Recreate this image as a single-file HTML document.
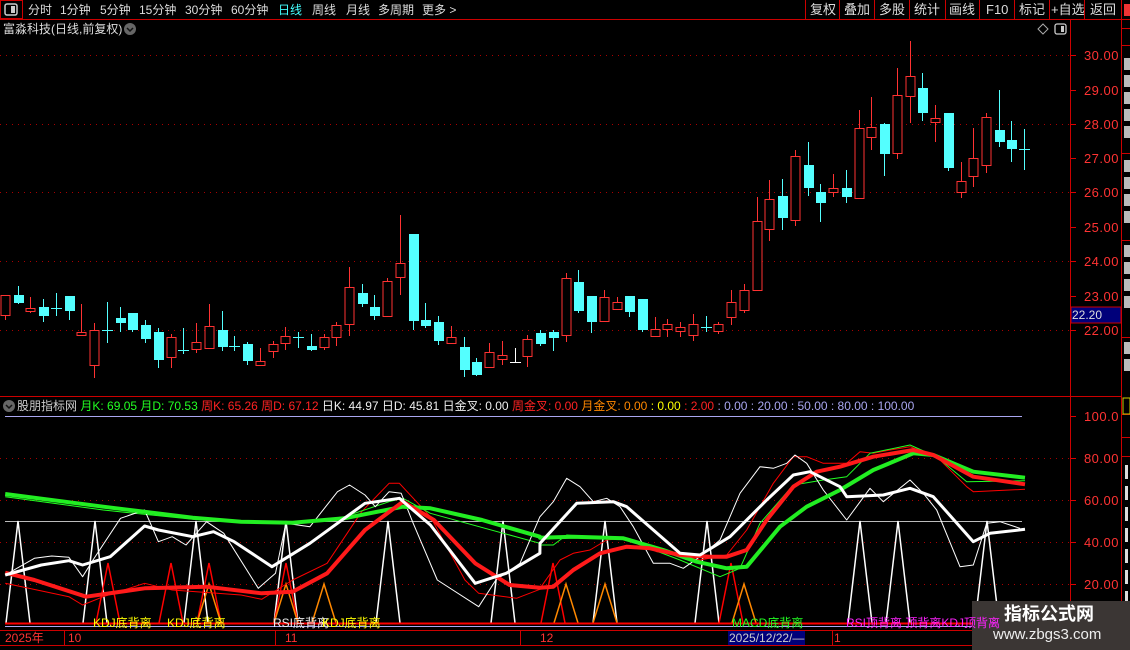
<!DOCTYPE html>
<html><head><meta charset="utf-8">
<style>
*{margin:0;padding:0;box-sizing:border-box}
body{width:1130px;height:650px;background:#000;overflow:hidden;position:relative;font-family:"Liberation Sans","Noto Sans CJK SC",sans-serif;color:#ddd}
.t{position:absolute;white-space:nowrap;font-size:13px;line-height:16px}
.m{position:absolute;white-space:nowrap;font-size:12px;line-height:16px;top:2px;color:#ddd}
.ax{position:absolute;left:1083px;width:36px;text-align:right;color:#ff3333;font-size:13px;line-height:14px;letter-spacing:0.5px}
</style></head><body>
<svg id="s" width="1130" height="650" style="position:absolute;left:0;top:0">
<rect x="0.5" y="0.5" width="22" height="18" fill="none" stroke="#c00" stroke-width="1"/>
<rect x="5" y="4" width="12" height="11" rx="2" fill="none" stroke="#ccc" stroke-width="1.5"/>
<rect x="11" y="6" width="4" height="7" fill="#ccc"/>
<line x1="0" y1="19.5" x2="1130" y2="19.5" stroke="#c00"/>
<g stroke="#c00">
<line x1="805.5" y1="0" x2="805.5" y2="19"/><line x1="839.5" y1="0" x2="839.5" y2="19"/><line x1="874.5" y1="0" x2="874.5" y2="19"/><line x1="909.5" y1="0" x2="909.5" y2="19"/><line x1="945.5" y1="0" x2="945.5" y2="19"/><line x1="979.5" y1="0" x2="979.5" y2="19"/><line x1="1014.5" y1="0" x2="1014.5" y2="19"/><line x1="1049.5" y1="0" x2="1049.5" y2="19"/><line x1="1084.5" y1="0" x2="1084.5" y2="19"/><line x1="1121.5" y1="0" x2="1121.5" y2="19"/>
<line x1="1070.5" y1="20" x2="1070.5" y2="630"/>
<line x1="1121.5" y1="20" x2="1121.5" y2="650"/>
<line x1="0" y1="396.5" x2="1121" y2="396.5"/>
</g>
<rect x="1124" y="4" width="6" height="12" fill="#e33"/>
<circle cx="130" cy="29" r="6" fill="#666"/><path d="M127 28l3 3 3-3" stroke="#111" stroke-width="1.5" fill="none"/>
<path d="M1043 24l5 5-5 5-5-5z" fill="none" stroke="#aaa"/>
<rect x="1055" y="24" width="11" height="10" rx="2" fill="none" stroke="#ccc" stroke-width="1.3"/><rect x="1061" y="26" width="3" height="6" fill="#ccc"/>
<g stroke="#a00" stroke-dasharray="1 5">
<line x1="0" y1="55.5" x2="1070" y2="55.5"/><line x1="0" y1="124.5" x2="1070" y2="124.5"/><line x1="0" y1="192.5" x2="1070" y2="192.5"/><line x1="0" y1="261.5" x2="1070" y2="261.5"/><line x1="0" y1="330.5" x2="1070" y2="330.5"/>
<line x1="0" y1="458.5" x2="1070" y2="458.5"/><line x1="0" y1="500.5" x2="1070" y2="500.5"/><line x1="0" y1="542.5" x2="1070" y2="542.5"/><line x1="0" y1="584.5" x2="1070" y2="584.5"/>
</g>
<g stroke="#d00">
<line x1="1071" y1="55.5" x2="1076" y2="55.5"/><line x1="1071" y1="90.5" x2="1076" y2="90.5"/><line x1="1071" y1="124.5" x2="1076" y2="124.5"/><line x1="1071" y1="158.5" x2="1076" y2="158.5"/><line x1="1071" y1="192.5" x2="1076" y2="192.5"/><line x1="1071" y1="227.5" x2="1076" y2="227.5"/><line x1="1071" y1="261.5" x2="1076" y2="261.5"/><line x1="1071" y1="296.5" x2="1076" y2="296.5"/><line x1="1071" y1="330.5" x2="1076" y2="330.5"/>
<line x1="1071" y1="416.5" x2="1076" y2="416.5"/><line x1="1071" y1="458.5" x2="1076" y2="458.5"/><line x1="1071" y1="500.5" x2="1076" y2="500.5"/><line x1="1071" y1="542.5" x2="1076" y2="542.5"/><line x1="1071" y1="584.5" x2="1076" y2="584.5"/>
</g>
<rect x="1071" y="307" width="50" height="16" fill="#00007a" stroke="#c00"/>
<line x1="1122" y1="28.5" x2="1130" y2="28.5" stroke="#c00"/><line x1="1122" y1="45.5" x2="1130" y2="45.5" stroke="#c00"/>
<line x1="1122" y1="153.5" x2="1130" y2="153.5" stroke="#c00"/><line x1="1122" y1="240.5" x2="1130" y2="240.5" stroke="#c00"/><line x1="1122" y1="337.5" x2="1130" y2="337.5" stroke="#c00"/>
<line x1="1122" y1="414.5" x2="1130" y2="414.5" stroke="#c00"/><line x1="1122" y1="437.5" x2="1130" y2="437.5" stroke="#c00"/><line x1="1122" y1="456.5" x2="1130" y2="456.5" stroke="#c00"/>
<rect x="1123" y="398" width="7" height="16" fill="none" stroke="#cc0"/>
<g fill="#bbb"><rect x="1124" y="58" width="6" height="12"/><rect x="1124" y="75" width="6" height="12"/><rect x="1124" y="92" width="6" height="12"/><rect x="1124" y="109" width="6" height="12"/><rect x="1124" y="126" width="6" height="12"/><rect x="1124" y="160" width="6" height="12"/><rect x="1124" y="177" width="6" height="12"/><rect x="1124" y="194" width="6" height="12"/><rect x="1124" y="211" width="6" height="12"/><rect x="1124" y="245" width="6" height="12"/><rect x="1124" y="262" width="6" height="12"/><rect x="1124" y="279" width="6" height="12"/><rect x="1124" y="296" width="6" height="12"/><rect x="1124" y="342" width="6" height="12"/><rect x="1124" y="359" width="6" height="12"/></g>
<g fill="#ddd"><rect x="1125" y="465" width="3" height="14"/><rect x="1125" y="507" width="3" height="14"/><rect x="1125" y="549" width="3" height="14"/><rect x="1125" y="591" width="3" height="14"/><rect x="1125" y="486" width="3" height="14"/><rect x="1125" y="528" width="3" height="14"/><rect x="1125" y="570" width="3" height="14"/></g>
<line x1="5" y1="416.5" x2="1022" y2="416.5" stroke="#a9a6f0"/>
<line x1="5" y1="521.5" x2="1022" y2="521.5" stroke="#bbb"/>
<g id="ind"></g>
<g id="cd"></g>
<line x1="5" y1="623.5" x2="1070" y2="623.5" stroke="#f00" stroke-width="2"/>
<line x1="5" y1="626.5" x2="1070" y2="626.5" stroke="#a9a6f0"/>
<line x1="0" y1="630.5" x2="1121" y2="630.5" stroke="#c00"/>
<line x1="0" y1="645.5" x2="1121" y2="645.5" stroke="#c00"/>
<g stroke="#c00"><line x1="64.5" y1="630" x2="64.5" y2="645"/><line x1="275.5" y1="630" x2="275.5" y2="645"/><line x1="520.5" y1="630" x2="520.5" y2="645"/><line x1="832.5" y1="630" x2="832.5" y2="645"/></g>
<rect x="728" y="631" width="77" height="14" fill="#00007a"/>
<rect x="972" y="601" width="158" height="49" fill="#3b3634"/>
</svg>
<div class="m" style="left:28px">分时</div><div class="m" style="left:60px">1分钟</div><div class="m" style="left:100px">5分钟</div><div class="m" style="left:139px">15分钟</div><div class="m" style="left:185px">30分钟</div><div class="m" style="left:231px">60分钟</div><div class="m" style="left:278px;color:#4ff">日线</div><div class="m" style="left:312px">周线</div><div class="m" style="left:346px">月线</div><div class="m" style="left:378px">多周期</div><div class="m" style="left:422px">更多 &gt;</div>
<div class="t" style="left:810px;top:2px">复权</div><div class="t" style="left:844px;top:2px">叠加</div><div class="t" style="left:879px;top:2px">多股</div><div class="t" style="left:914px;top:2px">统计</div><div class="t" style="left:949px;top:2px">画线</div><div class="t" style="left:986px;top:2px">F10</div><div class="t" style="left:1019px;top:2px">标记</div><div class="t" style="left:1051px;top:2px">+自选</div><div class="t" style="left:1090px;top:2px">返回</div>
<div class="t" style="left:3px;top:21px;color:#ddd;font-size:12px">富淼科技(日线,前复权)</div>
<div class="ax" style="top:49px">30.00</div><div class="ax" style="top:84px">29.00</div><div class="ax" style="top:118px">28.00</div><div class="ax" style="top:152px">27.00</div><div class="ax" style="top:186px">26.00</div><div class="ax" style="top:221px">25.00</div><div class="ax" style="top:255px">24.00</div><div class="ax" style="top:290px">23.00</div><div class="ax" style="top:324px">22.00</div>
<div class="t" style="left:1072px;top:307px;color:#ddd;font-size:12px">22.20</div>
<div class="ax" style="top:410px">100.0</div><div class="ax" style="top:452px">80.00</div><div class="ax" style="top:494px">60.00</div><div class="ax" style="top:536px">40.00</div><div class="ax" style="top:578px">20.00</div>
<svg width="14" height="14" style="position:absolute;left:2px;top:399px"><circle cx="7" cy="7" r="6" fill="#666"/><path d="M4 6l3 3 3-3" stroke="#111" stroke-width="1.5" fill="none"/></svg>
<div class="t" style="left:17px;top:398px;font-size:12px;color:#ccc">股朋指标网 <span style="color:#2f2">月K: 69.05 月D: 70.53</span> <span style="color:#f22">周K: 65.26 周D: 67.12</span> <span style="color:#eee">日K: 44.97 日D: 45.81 日金叉: 0.00</span> <span style="color:#f22">周金叉: 0.00</span> <span style="color:#f80">月金叉: 0.00</span> <span style="color:#ff0">: 0.00</span> <span style="color:#f22">: 2.00</span> <span style="color:#a9a6f0">: 0.00 : 20.00 : 50.00 : 80.00 : 100.00</span></div>
<div class="t" style="left:93px;top:615px;font-size:12px;color:#ff0">KDJ底背离</div>
<div class="t" style="left:167px;top:615px;font-size:12px;color:#ff0">KDJ底背离</div>
<div class="t" style="left:273px;top:615px;font-size:12px;color:#eee">RSI底背离</div>
<div class="t" style="left:322px;top:615px;font-size:12px;color:#ff0">KDJ底背离</div>
<div class="t" style="left:732px;top:615px;font-size:12px;color:#2f2">MACD底背离</div>
<div class="t" style="left:846px;top:615px;font-size:12px;color:#f2f">RSI顶背离 顶背离KDJ顶背离</div>
<div class="t" style="left:5px;top:630px;color:#f33;font-size:12px">2025年</div>
<div class="t" style="left:68px;top:630px;color:#f33;font-size:12px">10</div>
<div class="t" style="left:285px;top:630px;color:#f33;font-size:12px">11</div>
<div class="t" style="left:540px;top:630px;color:#f33;font-size:12px">12</div>
<div class="t" style="left:729px;top:630px;color:#ccc;font-size:12px">2025/12/22/—</div>
<div class="t" style="left:834px;top:630px;color:#f33;font-size:12px">1</div>
<div class="t" style="left:1004px;top:603px;color:#fff;font-size:18px;line-height:22px;font-weight:bold">指标公式网</div>
<div class="t" style="left:993px;top:626px;color:#eee;font-size:15px;line-height:18px">www.zbgs3.com</div>
<script>
var NS="http://www.w3.org/2000/svg";
function el(p,t,a){var e=document.createElementNS(NS,t);for(var k in a)e.setAttribute(k,a[k]);p.appendChild(e);return e;}
var C=[[295,315,295,319,1],[295,302,286,303,0],[308,311,297,312,1],[307,315,299,321,0],[308,308,293,315,0],[296,310,296,319,0],[332,335,304,335,1],[330,365,323,377,1],[330,330,302,342,0],[318,322,307,331,0],[313,329,313,331,0],[325,338,320,342,0],[332,359,328,367,0],[337,357,334,367,1],[350,350,328,353,0],[342,349,323,352,1],[326,348,304,348,1],[330,346,311,350,0],[346,346,336,350,0],[344,360,342,364,0],[361,365,348,365,1],[344,351,341,357,1],[336,343,327,349,1],[337,337,332,347,0],[346,349,334,350,0],[337,347,334,349,1],[325,337,322,345,1],[287,324,267,335,1],[293,303,284,306,0],[307,315,295,319,0],[281,316,278,316,1],[263,277,215,294,1],[234,320,234,329,0],[320,325,303,327,0],[322,340,316,344,0],[337,343,326,343,1],[347,369,337,376,0],[362,374,358,375,0],[352,367,343,367,1],[355,359,341,364,1],[362,362,348,362,2],[339,356,335,366,1],[333,343,330,345,0],[332,337,330,350,0],[278,335,273,341,1],[282,310,270,312,0],[296,321,296,332,0],[297,321,290,321,1],[302,309,297,309,1],[296,311,296,316,0],[299,329,299,331,0],[329,336,317,336,1],[324,329,319,336,1],[327,331,322,336,1],[324,335,314,340,1],[327,327,316,331,0],[324,331,322,333,1],[302,317,290,324,1],[290,310,284,312,1],[221,290,197,290,1],[199,229,180,240,1],[196,217,179,229,0],[156,220,150,225,1],[165,187,142,195,0],[192,202,184,221,0],[188,192,174,196,1],[188,196,170,202,0],[128,198,110,198,1],[127,137,97,149,1],[124,153,123,175,0],[95,153,68,158,1],[76,96,41,122,1],[88,112,73,120,0],[118,122,105,141,1],[113,167,113,170,0],[181,192,162,197,1],[158,176,128,186,1],[117,165,113,172,1],[130,141,90,146,0],[140,148,121,161,0],[149,149,129,169,0]];
var g=document.getElementById('cd');
C.forEach(function(c,i){var x=Math.round(5+i*12.74);var col=c[4]==1?'#ff3232':(c[4]==2?'#fff':'#54ffff');
el(g,'line',{x1:x+.5,y1:c[2],x2:x+.5,y2:c[3]+1,stroke:col});
if(c[1]-c[0]<2){el(g,'line',{x1:x-5,y1:c[0]+.5,x2:x+6,y2:c[0]+.5,stroke:col});}
else if(c[4]==1){el(g,'rect',{x:x-4,y:c[0]+.5,width:9,height:c[1]-c[0],fill:'#000',stroke:col});}
else el(g,'rect',{x:x-4,y:c[0],width:10,height:c[1]-c[0]+1,fill:col});});
var gi=document.getElementById('ind');
function L(zL,zR,col,w){var pts=[];for(var i=0;i<zL.length;i+=2)pts.push((zL[i]/2.904).toFixed(1)+','+(440+zL[i+1]/3).toFixed(1));for(var i=0;i<zR.length;i+=2)pts.push((540+zR[i]/3).toFixed(1)+','+(440+zR[i+1]/3).toFixed(1));el(gi,'polyline',{points:pts.join(' '),fill:'none',stroke:col,'stroke-width':w,'stroke-linejoin':'round'});}
function spike(x,top,col){el(gi,'polyline',{points:(x-12)+',623 '+x+','+top+' '+(x+12)+',623',fill:'none',stroke:col,'stroke-width':1.5});}
[18,95,196,286,388,503,605,707,860,898,987].forEach(function(x){spike(x,521,'#fff')});
[108,171,209,286,553,731].forEach(function(x){spike(x,563,'#f00')});
[209,286,324,566,605,744].forEach(function(x){spike(x,584,'#f80')});
L([15,430,200,470,240,495,300,470,420,430,500,450,700,465,760,478,850,420,950,370,1050,215,1130,130,1160,130,1250,230,1350,420,1390,460,1500,475,1568,448],[0,445,60,360,100,340,150,330,200,300,250,295,300,315,350,335,420,345,480,360,560,345,620,270,700,130,760,50,800,50,850,70,920,70,960,35,1000,40,1050,30,1110,20,1190,50,1280,140,1300,155,1455,148],'#f00',1);
L([15,170,300,210,560,238,700,248,850,250,1000,230,1130,185,1170,175,1250,220,1568,310],[0,315,40,315,80,285,150,290,250,295,420,360,540,410,600,385,660,250,760,135,850,120,920,110,990,40,1110,15,1190,50,1280,125,1455,122],'#2f2',1);
L([15,405,100,355,150,348,200,352,240,410,270,360,350,235,420,210,460,305,500,290,540,315,600,245,650,280,750,445,800,400,830,250,900,260,980,155,1015,135,1060,165,1090,200,1130,155,1165,160,1200,250,1270,420,1390,500,1440,420,1510,370,1568,230],[0,230,40,185,80,115,120,140,160,185,200,175,240,200,280,260,340,370,390,370,430,385,480,350,540,300,600,160,660,80,700,85,740,70,765,45,800,70,850,150,920,240,990,145,1030,185,1110,120,1150,160,1190,210,1260,380,1300,375,1340,250,1380,245,1440,265],'#fff',1);
L([15,162,300,200,560,233,700,245,850,248,1000,235,1170,200,1250,205,1400,240,1568,290],[0,293,100,290,250,295,370,330,470,365,560,385,620,380,720,260,800,200,900,150,1000,90,1120,40,1180,45,1300,95,1455,113],'#22ee22',4);
L([15,398,100,420,250,470,420,445,600,440,760,460,850,455,950,400,1060,270,1170,185,1260,240,1380,370,1480,435,1568,443],[0,443,40,440,100,390,180,340,260,320,330,325,420,345,510,350,560,350,620,330,680,240,760,140,830,95,900,80,1000,50,1120,30,1180,45,1300,110,1455,133],'#ff1a1a',4);
L([15,405,120,375,200,362,240,375,320,350,420,258,460,270,560,290,620,275,680,305,790,380,900,310,1060,190,1160,175,1250,255,1380,430,1470,400,1568,340],[0,310,110,190,220,185,260,200,420,340,480,345,570,290,680,180,760,105,810,95,900,140,920,170,1030,165,1110,145,1180,170,1300,305,1350,280,1455,268],'#fff',3);
</script>
</body></html>
